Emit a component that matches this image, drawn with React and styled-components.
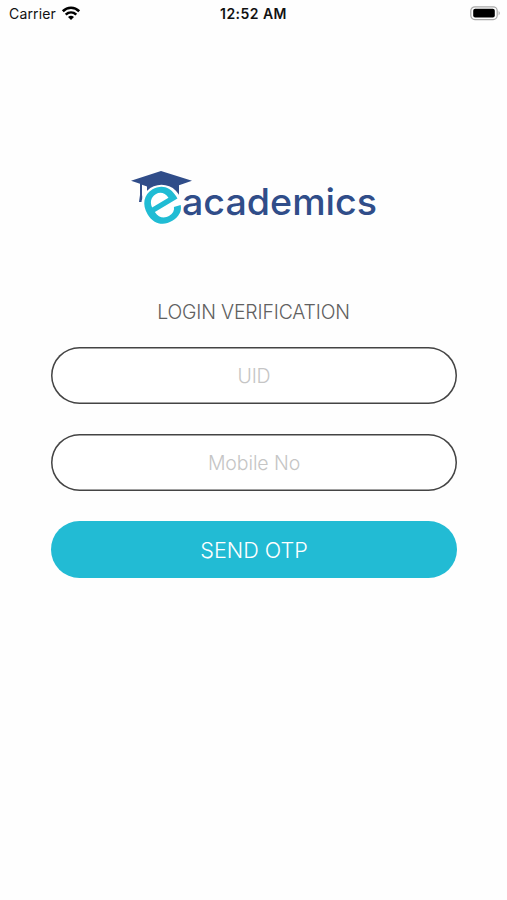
import React from 'react';

import styled, { createGlobalStyle } from 'styled-components';

const Logo = () => {
    return <LogoSvg width="250" height="62" viewBox="0 0 250 62" role="img" aria-label="eacademics">
        <path d="M2 12.8 L32 3 L63 12.8 L50 17.3 L50 35 L18 35 L18 18.4 L13 16.7 L13 27 L14 34 L10 34 L11 27 L11 15.8 Z" fill="#304d89" />
        <circle cx="32.5" cy="37" r="20.3" fill="#fff" />
        <LogoMark x="0" y="18.2" textAnchor="middle" transform="translate(32.7 37) rotate(-31) scale(1.03 1)">e</LogoMark>
        <LogoWord x="53" y="47" textLength="195" lengthAdjust="spacingAndGlyphs">academics</LogoWord>
    </LogoSvg>;
};

const App = () => {
    return <Screen>
        <GlobalStyle />
        <StatusBar>
            <Carrier>
                <span>Carrier</span>
                <svg width="20" height="15" viewBox="0 0 20 15" fill="none" stroke="#000" strokeWidth="2.6">
                    <path d="M1.8 5.2 C6.5 0.6 13.5 0.6 18.2 5.2" />
                    <path d="M4.7 8.6 C7.8 5.8 12.2 5.8 15.3 8.6" />
                    <path d="M7 10.9 Q10 8.7 13 10.9 L10 14 Z" fill="#000" stroke="none" />
                </svg>
            </Carrier>
            <Time>12:52 AM</Time>
            <Battery>
                <svg width="31" height="15" viewBox="0 0 31 15">
                    <rect x="0.8" y="0.8" width="26.4" height="12.8" rx="4" fill="#fff" stroke="#a9a9a9" strokeWidth="1.2" />
                    <rect x="3.2" y="2.8" width="21.6" height="8.8" rx="2" fill="#000" />
                    <path d="M28.6 5 Q31 7.2 28.6 9.4 Z" fill="#a9a9a9" />
                </svg>
            </Battery>
        </StatusBar>
        <Brand>
            <Logo />
        </Brand>
        <Title>LOGIN VERIFICATION</Title>
        <Form>
            <Input type="text" placeholder="UID" $spacing="-0.2px" />
            <Input type="text" placeholder="Mobile No" $spacing="-0.1px" />
            <Button type="button">SEND OTP</Button>
        </Form>
    </Screen>;
};

const GlobalStyle = createGlobalStyle`
    * {
        box-sizing: border-box;
    }

    body {
        margin: 0;
        background: #fefefe;
        font-family: Inter, "Liberation Sans", sans-serif;
    }
`;

const Screen = styled.main`
    display: flex;
    flex-direction: column;
    width: 507px;
    height: 900px;
    overflow: hidden;
`;

const StatusBar = styled.header`
    display: grid;
    grid-template-columns: 1fr auto 1fr;
    align-items: center;
    height: 27px;
    padding: 0 6px 0 9px;
    color: #111;
    font-size: 14px;
`;

const Carrier = styled.div`
    display: flex;
    align-items: center;
    gap: 5px;
    letter-spacing: 0.15px;
`;

const Time = styled.div`
    margin-right: 3px;
    font-weight: 600;
    letter-spacing: 0.45px;
`;

const Battery = styled.div`
    display: flex;
    justify-content: flex-end;
`;

const Brand = styled.div`
    display: flex;
    justify-content: center;
    height: 62px;
    margin-top: 141px;
`;

const LogoSvg = styled.svg`
    overflow: visible;
`;

const LogoMark = styled.text`
    fill: #20bcd4;
    font-family: Inter, sans-serif;
    font-size: 66px;
    font-weight: 500;
`;

const LogoWord = styled.text`
    fill: #304d89;
    font-family: Inter, sans-serif;
    font-size: 37px;
    font-weight: 500;
`;

const Title = styled.h1`
    margin: 70px 0 0;
    color: #606060;
    font-size: 19.4px;
    font-weight: 300;
    letter-spacing: -0.15px;
    line-height: 24px;
    text-align: center;
`;

const Form = styled.form`
    display: flex;
    flex-direction: column;
    gap: 30px;
    padding: 23px 50px 0 51px;
`;

const Input = styled.input`
    height: 57px;
    padding: 0 20px;
    border: 0;
    border-radius: 29px;
    outline: none;
    background: #fff;
    box-shadow: inset 0 0 0 1.5px #444;
    font-family: inherit;
    font-size: 19.5px;
    font-weight: 300;
    letter-spacing: ${(props) => props.$spacing};
    text-align: center;

    &::placeholder {
        color: #c5c5c5;
        opacity: 1;
    }
`;

const Button = styled.button`
    height: 57px;
    border: 0;
    border-radius: 29px;
    background: #22bbd4;
    color: #fff;
    font-family: inherit;
    font-size: 21.6px;
    font-weight: 300;
`;

export default App;
